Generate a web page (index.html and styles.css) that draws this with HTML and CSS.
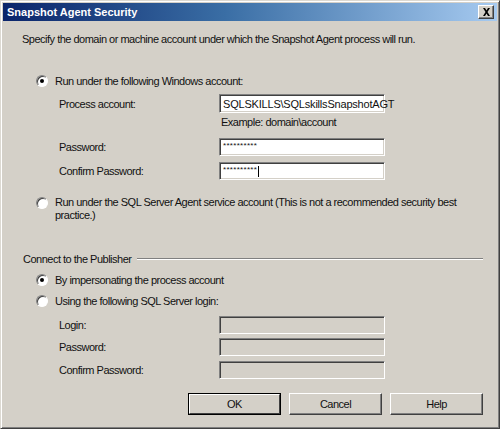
FILE: index.html
```html
<!DOCTYPE html>
<html>
<head>
<meta charset="utf-8">
<link rel="stylesheet" href="styles.css">
</head>
<body>
<div class="window">
  <div class="titlebar">
    <span class="title">Snapshot Agent Security</span>
    <span class="close"><svg width="9" height="8" viewBox="0 0 9 8"><path d="M1 0h2l1.5 2.5L6 0h2L5.5 4 8 8H6L4.5 5.5 3 8H1l2.5-4z" fill="#000"/></svg></span>
  </div>
  <div class="content">
    <div class="desc">Specify the domain or machine account under which the Snapshot Agent process will run.</div>

    <div class="radio-row r1"><span class="radio checked"></span><span class="rlabel">Run under the following Windows account:</span></div>
    <div class="field-row f-process"><span class="flabel">Process account:</span><span class="input"><span class="val">SQLSKILLS\SQLskillsSnapshotAGT</span></span></div>
    <div class="example">Example: domain\account</div>
    <div class="field-row f-pwd"><span class="flabel">Password:</span><span class="input"><span class="dots">**********</span></span></div>
    <div class="field-row f-conf"><span class="flabel">Confirm Password:</span><span class="input"><span class="dots">**********</span><span class="caret"></span></span></div>

    <div class="radio-row r2"><span class="radio"></span><span class="rlabel two">Run under the SQL Server Agent service account (This is not a recommended security best<br>practice.)</span></div>

    <div class="group"><span class="gtitle">Connect to the Publisher</span><span class="gline"></span></div>

    <div class="radio-row r3"><span class="radio checked"></span><span class="rlabel">By impersonating the process account</span></div>
    <div class="radio-row r4"><span class="radio"></span><span class="rlabel">Using the following SQL Server login:</span></div>
    <div class="field-row f-login"><span class="flabel">Login:</span><span class="input disabled"></span></div>
    <div class="field-row f-lpwd"><span class="flabel">Password:</span><span class="input disabled"></span></div>
    <div class="field-row f-lconf"><span class="flabel">Confirm Password:</span><span class="input disabled"></span></div>

    <div class="buttons">
      <span class="btn default"><span class="btn-in">OK</span></span>
      <span class="btn"><span class="btn-in">Cancel</span></span>
      <span class="btn"><span class="btn-in">Help</span></span>
    </div>
  </div>
</div>
</body>
</html>
```
FILE: styles.css
```css
* { box-sizing: border-box; }
html, body { margin: 0; padding: 0; }
body {
  width: 500px;
  height: 429px;
  overflow: hidden;
  background: #d4d0c8;
  font-family: "Liberation Sans", Arial, sans-serif;
  font-size: 11px;
  letter-spacing: -0.5px;
  color: #111;
}
.window {
  width: 500px;
  height: 429px;
  background: #d4d0c8;
  border-top: 1px solid #dcd9d2;
  border-left: 1px solid #dcd9d2;
  border-right: 1px solid #404040;
  border-bottom: 1px solid #404040;
  box-shadow: inset 1px 1px 0 #ffffff, inset -1px -1px 0 #808080;
  padding: 2px 2px 2px 2px;
}
.titlebar {
  height: 18px;
  background: linear-gradient(to right, #0a246a 0%, #3a6ea5 45%, #a6caf0 100%);
  display: flex;
  align-items: center;
  justify-content: space-between;
  padding: 0 3px 0 4px;
}
.title {
  color: #fff;
  font-weight: bold;
  font-size: 11px;
  letter-spacing: 0;
}
.close {
  width: 16px;
  height: 14px;
  background: #d4d0c8;
  border-top: 1px solid #fff;
  border-left: 1px solid #fff;
  border-right: 1px solid #404040;
  border-bottom: 1px solid #404040;
  box-shadow: inset -1px -1px 0 #808080;
  display: flex;
  align-items: center;
  justify-content: center;
}
.content {
  padding: 0 14px 0 17px;
  display: flex;
  flex-direction: column;
}
.desc {
  margin-top: 11px;
  line-height: 14px;
  padding-left: 2px;
}
.radio-row {
  display: flex;
  align-items: flex-start;
  margin-left: 16px;
  line-height: 14px;
}
.radio {
  flex: none;
  width: 12px;
  height: 12px;
  margin-top: 1px;
  border-radius: 50%;
  background: #fff;
  border: 1px solid;
  border-color: #808080 #fff #fff #808080;
  box-shadow: inset 1px 1px 0 #404040;
  position: relative;
}
.radio.checked::after {
  content: "";
  position: absolute;
  left: 3px;
  top: 3px;
  width: 4px;
  height: 4px;
  border-radius: 50%;
  background: #000;
}
.rlabel { margin-left: 7px; }
.rlabel.two { line-height: 13px; }
.r1 { margin-top: 28px; }
.r2 { margin-top: 16px; }
.r3 { margin-top: 7px; }
.r4 { margin-top: 7px; }

.field-row {
  display: flex;
  align-items: center;
  margin-left: 39px;
}
.flabel {
  width: 160px;
  flex: none;
}
.input {
  width: 166px;
  height: 18px;
  background: #fff;
  border: 1px solid;
  border-color: #808080 #fff #fff #808080;
  box-shadow: inset 1px 1px 0 #404040, inset -1px -1px 0 #d4d0c8;
  display: flex;
  align-items: center;
  padding-left: 3px;
  position: relative;
}
.input.disabled { background: #d4d0c8; }
.val { font-size: 11px; letter-spacing: -0.2px; }
.dots {
  font-size: 8px;
  letter-spacing: 0.3px;
  line-height: 8px;
  margin-top: -3px;
}
.caret {
  width: 1px;
  height: 11px;
  background: #000;
  margin-left: 1px;
}
.f-process { margin-top: 6px; }
.f-process .input { height: 19px; }
.example {
  margin-top: 2px;
  line-height: 14px;
  padding-left: 201px;
}
.f-pwd { margin-top: 9px; }
.f-conf { margin-top: 6px; }
.f-login { margin-top: 8px; }
.f-lpwd { margin-top: 4px; }
.f-lconf { margin-top: 5px; }

.group {
  margin-top: 30px;
  display: flex;
  align-items: center;
  line-height: 14px;
}
.gtitle { padding-left: 3px; }
.gline {
  flex: 1;
  height: 2px;
  margin-left: 6px;
  border-top: 1px solid #808080;
  border-bottom: 1px solid #fff;
}
.buttons {
  margin-top: 14px;
  display: flex;
  justify-content: flex-end;
  gap: 8px;
}
.btn {
  width: 93px;
  height: 22px;
  background: #d4d0c8;
  border-top: 1px solid #fff;
  border-left: 1px solid #fff;
  border-right: 1px solid #404040;
  border-bottom: 1px solid #404040;
  box-shadow: inset -1px -1px 0 #808080;
  display: flex;
}
.btn.default {
  border: 1px solid #000;
  box-shadow: none;
}
.btn-in {
  flex: 1;
  display: flex;
  align-items: center;
  justify-content: center;
}
.btn.default .btn-in {
  border-top: 1px solid #fff;
  border-left: 1px solid #fff;
  border-right: 1px solid #404040;
  border-bottom: 1px solid #404040;
}
```
